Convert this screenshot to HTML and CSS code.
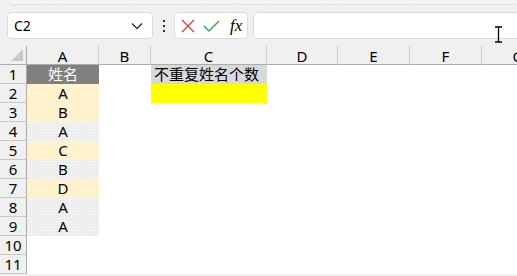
FILE: index.html
```html
<!DOCTYPE html>
<html lang="zh">
<head>
    <meta charset="UTF-8">
    <title>Sheet</title>
    <link rel="stylesheet" href="styles.css">
</head>
<body>
<div class="ribbon"></div>
<div class="bar">
    <div class="namebox">
        <span>C2</span>
        <svg width="12" height="8" viewBox="0 0 12 8"><path d="M1 1.5 L6 6.5 L11 1.5" fill="none" stroke="#333" stroke-width="1.4"/></svg>
    </div>
    <div class="dots"><i></i><i></i><i></i></div>
    <div class="btns">
        <svg width="14" height="14" viewBox="0 0 14 14"><path d="M1 1 L13 13 M13 1 L1 13" stroke="#e04848" stroke-width="1.5"/></svg>
        <svg width="17" height="14" viewBox="0 0 17 14"><path d="M1 7 L6 12 L16 2" fill="none" stroke="#3fa85a" stroke-width="1.5"/></svg>
        <span class="fx">fx</span>
    </div>
    <div class="formula">
        <svg class="ibeam" width="9" height="17" viewBox="0 0 9 17"><path d="M1 1 H8 M1 16 H8 M4.5 1 V16" stroke="#000" stroke-width="1.3" fill="none"/></svg>
    </div>
</div>
<div class="sheet">
    <div class="corner"><span></span></div>
    <div class="ch">A</div>
    <div class="ch">B</div>
    <div class="ch">C</div>
    <div class="ch">D</div>
    <div class="ch">E</div>
    <div class="ch">F</div>
    <div class="ch last">G</div>

    <div class="rh">1</div><div class="c head">姓名</div><div class="c"></div><div class="c title">不重复姓名个数</div><div class="c"></div><div class="c"></div><div class="c"></div><div class="c"></div>
    <div class="rh">2</div><div class="c cream">A</div><div class="c"></div><div class="c yellow"></div><div class="c"></div><div class="c"></div><div class="c"></div><div class="c"></div>
    <div class="rh">3</div><div class="c cream">B</div><div class="c"></div><div class="c"></div><div class="c"></div><div class="c"></div><div class="c"></div><div class="c"></div>
    <div class="rh">4</div><div class="c dots-bg">A</div><div class="c"></div><div class="c"></div><div class="c"></div><div class="c"></div><div class="c"></div><div class="c"></div>
    <div class="rh">5</div><div class="c cream">C</div><div class="c"></div><div class="c"></div><div class="c"></div><div class="c"></div><div class="c"></div><div class="c"></div>
    <div class="rh">6</div><div class="c dots-bg">B</div><div class="c"></div><div class="c"></div><div class="c"></div><div class="c"></div><div class="c"></div><div class="c"></div>
    <div class="rh">7</div><div class="c cream">D</div><div class="c"></div><div class="c"></div><div class="c"></div><div class="c"></div><div class="c"></div><div class="c"></div>
    <div class="rh">8</div><div class="c dots-bg">A</div><div class="c"></div><div class="c"></div><div class="c"></div><div class="c"></div><div class="c"></div><div class="c"></div>
    <div class="rh">9</div><div class="c dots-bg">A</div><div class="c"></div><div class="c"></div><div class="c"></div><div class="c"></div><div class="c"></div><div class="c"></div>
    <div class="rh">10</div><div class="c"></div><div class="c"></div><div class="c"></div><div class="c"></div><div class="c"></div><div class="c"></div><div class="c"></div>
    <div class="rh">11</div><div class="c"></div><div class="c"></div><div class="c"></div><div class="c"></div><div class="c"></div><div class="c"></div><div class="c"></div>
</div>
</body>
</html>
```

FILE: styles.css
```css
*{
    margin: 0;
    padding: 0;
    box-sizing: border-box;
}
body{
    width: 517px;
    height: 276px;
    overflow: hidden;
    background: #f0f0f0;
    font-family: "Noto Sans", "Noto Sans CJK SC", sans-serif;
    color: #000;
}
.ribbon{
    height: 5px;
    margin-left: 7px;
    background: repeating-linear-gradient(135deg, #f7f7f7 0 2px, #ececec 2px 3px);
    border: 1px solid #e4e4e4;
    border-top: none;
    border-right: none;
    border-radius: 0 0 0 6px;
}
.bar{
    display: flex;
    align-items: center;
    height: 41px;
    padding: 7px 0 7px 7px;
}
.namebox{
    width: 146px;
    height: 27px;
    background: #fff;
    border: 1px solid #dcdcdc;
    border-radius: 4px;
    display: flex;
    align-items: center;
    justify-content: space-between;
    padding: 0 9px 0 6px;
    font-size: 14px;
}
.dots{
    width: 21px;
    display: flex;
    flex-direction: column;
    align-items: center;
    gap: 3px;
}
.dots i{
    width: 2px;
    height: 2px;
    background: #333;
}
.btns{
    width: 74px;
    height: 27px;
    background: #fff;
    border: 1px solid #dcdcdc;
    border-radius: 4px;
    display: flex;
    align-items: center;
    gap: 8px;
    padding-left: 6px;
}
.fx{
    font-family: "Liberation Serif", serif;
    font-style: italic;
    font-size: 17px;
    margin-left: 2px;
}
.formula{
    flex: 1;
    margin-left: 5px;
    margin-right: -10px;
    height: 27px;
    background: #fff;
    border: 1px solid #dcdcdc;
    border-radius: 4px;
    position: relative;
}
.ibeam{
    position: absolute;
    left: 240px;
    top: 13px;
}
.sheet{
    display: grid;
    grid-template-columns: 27px 72px 52px 116px 71px 72px 72px 72px;
    grid-auto-rows: 19px;
    background: #fff;
}
.corner,.ch,.rh{
    background: #f0f0f0;
    font-size: 14px;
    display: flex;
    align-items: center;
    justify-content: center;
}
.corner{
    border-right: 1px solid #ababab;
    border-bottom: 1px solid #ababab;
    position: relative;
}
.corner span{
    position: absolute;
    right: 3px;
    bottom: 3px;
    width: 0;
    height: 0;
    border-left: 12px solid transparent;
    border-bottom: 12px solid #c9c9c9;
}
.ch{
    border-bottom: 1px solid #ababab;
    border-right: 1px solid #d0d0d0;
    padding-top: 2px;
    font-size: 15px;
    line-height: 15px;
}
.ch.last{
    border-right: none;
}
.rh{
    border-right: 1px solid #ababab;
    border-bottom: 1px solid #c8c8c8;
    font-size: 15px;
}
.c{
    font-size: 15px;
    display: flex;
    align-items: center;
    justify-content: center;
    line-height: 17px;
}
.head{
    background: #808080;
    color: #fff;
}
.title{
    background: #d9d9d9;
    justify-content: flex-start;
    padding-left: 3px;
}
.yellow{
    background: #ffff00;
}
.cream{
    background: #fff2cc;
}
.dots-bg{
    background-color: #eeeeee;
    background-image: radial-gradient(#fafafa 0.6px, transparent 0.9px);
    background-size: 3px 3px;
}
```
